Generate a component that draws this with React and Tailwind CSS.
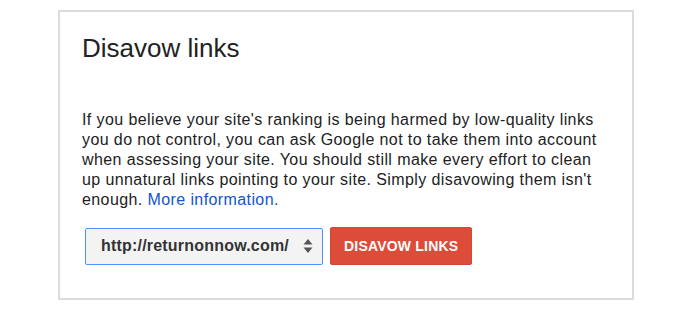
export default function App() {
  return (
    <div className="w-[700px] h-[314px] bg-white pt-[10px] pl-[58px]" style={{ fontFamily: '"Liberation Sans", Arial, sans-serif' }}>
      {/* Disavow card */}
      <div className="w-[576px] h-[290px] border-2 border-[#dcdcdc] pt-[21px] px-[22px]">
        <h1 className="text-[26px] leading-[30px] text-[#222]">Disavow links</h1>
        <p className="mt-[47px] text-[16px] leading-[20px] tracking-[0.4px] text-[#222]">
          If you believe your site's ranking is being harmed by low-quality links you do not control, you can ask Google
          not to take them into account when assessing your site. You should still make every effort to clean up
          unnatural links pointing to your site. Simply disavowing them isn't enough.{" "}
          <a href="#" className="text-[#1155cc]">More information.</a>
        </p>

        <div className="mt-[17px] ml-[3px] flex items-center gap-[7px]">
          <div className="w-[238px] h-[37px] flex items-center justify-between pl-[15px] pr-[9px] bg-[#f3f3f3] border border-[#4d90fe] rounded-[2px]">
            <span className="text-[16px] font-bold text-[#333] tracking-[0.2px]">http://returnonnow.com/</span>
            <svg width="10" height="16" viewBox="0 0 10 16" className="text-[#555]">
              <path d="M5 1 L9.5 6.5 H0.5 Z" fill="currentColor" />
              <path d="M5 15 L9.5 9.5 H0.5 Z" fill="currentColor" />
            </svg>
          </div>
          <button className="h-[38px] px-[13px] bg-[#dd4b39] border border-[#d14836] rounded-[2px] text-white text-[14px] font-bold tracking-[0.2px]">
            DISAVOW LINKS
          </button>
        </div>
      </div>
    </div>
  );
}
